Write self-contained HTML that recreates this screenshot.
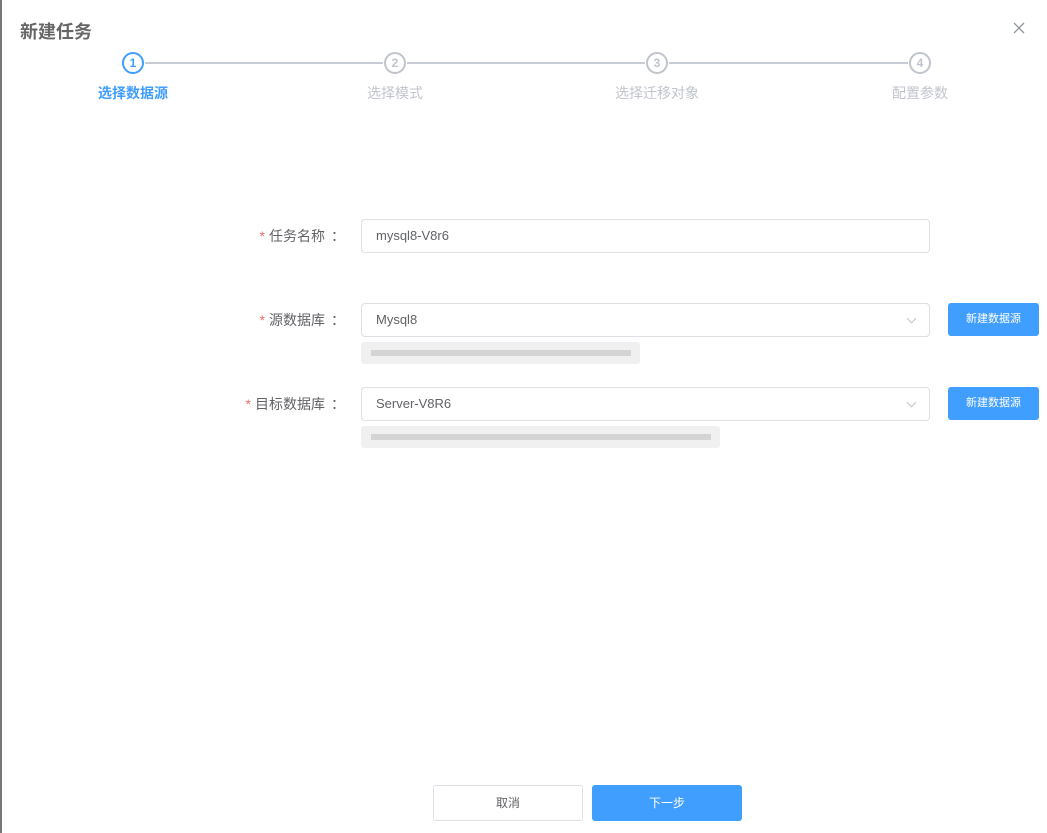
<!DOCTYPE html>
<html><head><meta charset="utf-8"><style>
body{margin:0;width:1047px;height:833px;background:#fff;font-family:"Liberation Sans","Noto Sans CJK SC",sans-serif;position:relative;overflow:hidden}
.a{position:absolute}
.lb{position:absolute;right:702px;font-size:14px;color:#606266;line-height:34px}
.lb i{color:#f56c6c;font-style:normal;margin-right:4px}
.lb b{font-weight:normal;margin-left:6px}
.in{position:absolute;left:361px;height:32px;border:1px solid #dcdfe6;border-radius:4px;font-size:13px;color:#606266;line-height:32px;padding-left:14px;box-sizing:content-box;width:553px}
.btn{position:absolute;left:948px;width:91px;height:33px;background:#409eff;border-radius:3px;color:#fff;font-size:11px;text-align:center;line-height:33px}
.hint{position:absolute;left:361px;height:22px;background:#f0f0f0;border-radius:3px}
.hint span{position:absolute;top:8px;height:6px;background:#d4d4d4}
.c{position:absolute;width:18px;height:18px;border:2px solid #c0c4cc;border-radius:50%;color:#c0c4cc;font-size:12px;font-weight:bold;text-align:center;line-height:18px;top:52px}
.st{position:absolute;top:83px;font-size:14px;color:#c0c4cc;width:160px;text-align:center}
.arr{position:absolute;right:14px;top:11px;width:6px;height:6px;border-right:1px solid #c0c4cc;border-bottom:1px solid #c0c4cc;transform:rotate(45deg)}
</style></head><body>
<div class="a" style="left:0;top:0;width:2px;height:833px;background:#777"></div>
<div class="a" style="left:20px;top:18px;font-size:18px;font-weight:bold;color:#666">新建任务</div>
<svg class="a" style="left:1013px;top:22px" width="12" height="12" viewBox="0 0 12 12"><path d="M1 1L11 11M11 1L1 11" stroke="#909399" stroke-width="1.3"/></svg>
<div class="a" style="left:145px;top:62px;width:238px;height:2px;background:#c8ccd4"></div>
<div class="a" style="left:407px;top:62px;width:238px;height:2px;background:#c8ccd4"></div>
<div class="a" style="left:669px;top:62px;width:239px;height:2px;background:#c8ccd4"></div>
<div class="c" style="left:122px;border-color:#409eff;color:#409eff">1</div>
<div class="c" style="left:384px">2</div>
<div class="c" style="left:646px">3</div>
<div class="c" style="left:909px">4</div>
<div class="st" style="left:53px;color:#409eff;font-weight:bold">选择数据源</div>
<div class="st" style="left:315px">选择模式</div>
<div class="st" style="left:577px">选择迁移对象</div>
<div class="st" style="left:840px">配置参数</div>

<div class="lb" style="top:219px"><i>*</i>任务名称<b>：</b></div>
<div class="in" style="top:219px">mysql8-V8r6</div>

<div class="lb" style="top:303px"><i>*</i>源数据库<b>：</b></div>
<div class="in" style="top:303px">Mysql8<div class="arr"></div></div>
<div class="btn" style="top:303px">新建数据源</div>
<div class="hint" style="top:342px;width:279px"><span style="left:10px;width:260px"></span></div>

<div class="lb" style="top:387px"><i>*</i>目标数据库<b>：</b></div>
<div class="in" style="top:387px">Server-V8R6<div class="arr"></div></div>
<div class="btn" style="top:387px">新建数据源</div>
<div class="hint" style="top:426px;width:359px"><span style="left:10px;width:340px"></span></div>

<div class="a" style="left:433px;top:785px;width:148px;height:34px;border:1px solid #dcdfe6;border-radius:3px;font-size:12px;color:#606266;text-align:center;line-height:34px">取消</div>
<div class="a" style="left:592px;top:785px;width:150px;height:36px;background:#409eff;border-radius:3px;font-size:12px;color:#fff;text-align:center;line-height:36px">下一步</div>
</body></html>
